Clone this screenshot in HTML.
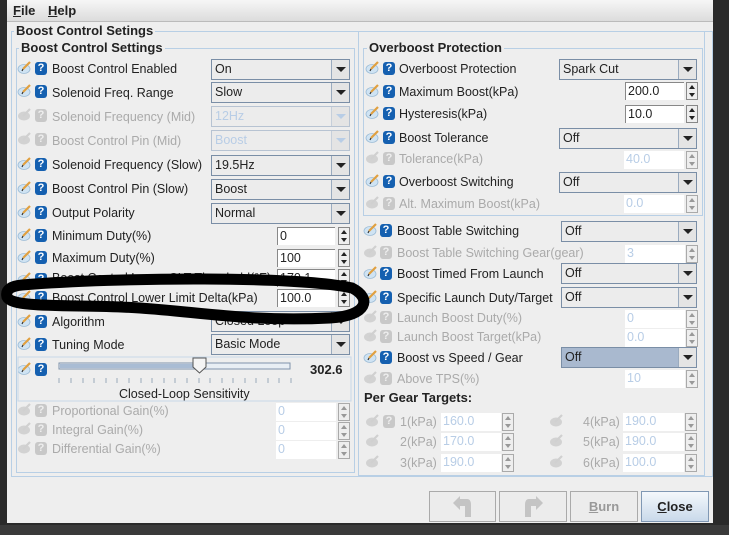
<!DOCTYPE html>
<html><head><meta charset="utf-8"><style>
*{margin:0;padding:0;box-sizing:border-box}
body{width:729px;height:535px;overflow:hidden;background:#2a2a2a;font-family:"Liberation Sans",sans-serif;font-size:12.5px;color:#222;position:relative}
.a{position:absolute}
.win{left:7px;top:0;width:706px;height:523px;background:#eeeeee}
.menu{left:7px;top:0;width:706px;height:22px;background:linear-gradient(#f6f6f6,#dcdcdc);border-bottom:1px solid #bbb}
.grp{border:1px solid #b8cfe5;}
.gt{background:#eeeeee;font-weight:bold;font-size:13px;padding:0 2px;color:#222}
.l{white-space:nowrap}
.d{color:#aaa}
.q{width:12px;height:13px;background:#1560b0;border-radius:3px;color:#fff;font-weight:bold;font-size:11px;text-align:center;line-height:13px}
.qd{background:#c8c8c8;color:#eee}
.cb{height:21px;border:1px solid #7a8ea6;background:#ececec;padding-left:3px;line-height:19px}
.cb i{position:absolute;right:0;top:0;width:18px;height:19px;border-left:1px solid #9aabbf;background:#e4e4e4}
.cb i:after{content:"";position:absolute;left:4px;top:7px;border-left:5px solid transparent;border-right:5px solid transparent;border-top:5px solid #222}
.cbd{border-color:#b7c3d2;color:#b8cde6}
.cbd i{border-color:#c6cfda}
.cbd i:after{border-top-color:#b8cde6}
.tf{height:18px;background:#fff;border-top:1px solid #888;border-left:1px solid #888;padding-left:2px;line-height:17px}
.tfd{border:none;color:#b8cde6}
.sp{width:12px;height:18px;border:1px solid #888;background:#eee}
.sp:before{content:"";position:absolute;left:2px;top:2px;border-left:3px solid transparent;border-right:3px solid transparent;border-bottom:4px solid #222}
.sp:after{content:"";position:absolute;left:2px;top:10px;border-left:3px solid transparent;border-right:3px solid transparent;border-top:4px solid #222}
.spd{border-color:#aaa}
.spd:before{border-bottom-color:#999}.spd:after{border-top-color:#999}
.btn{top:491px;height:31px;border:1px solid #aaa;background:#ececec;text-align:center;line-height:29px;color:#999;font-weight:bold;font-size:13px}
</style></head><body>
<div class="a win"></div>
<div class="a menu"></div>
<div class="a" style="left:13px;top:3px;font-weight:bold;font-size:13px"><u>F</u>ile</div>
<div class="a" style="left:48px;top:3px;font-weight:bold;font-size:13px"><u>H</u>elp</div>
<div class="a grp" style="left:11px;top:31px;width:702px;height:446px"></div>
<div class="a gt" style="left:14px;top:23px">Boost Control Setings</div>
<div class="a grp" style="left:16px;top:48px;width:339px;height:425px"></div>
<div class="a gt" style="left:19px;top:40px">Boost Control Settings</div>
<div class="a grp" style="left:358px;top:32px;width:347px;height:444px;border-top:none"></div>
<div class="a grp" style="left:363px;top:48px;width:340px;height:168px"></div>
<div class="a gt" style="left:367px;top:40px">Overboost Protection</div>

<svg class="a" style="left:0;top:0" width="729" height="535">
<defs>
<g id="b"><ellipse cx="6" cy="7" rx="6" ry="4.5" fill="#cfe3f3" stroke="#9bbbd6" stroke-width="0.8"/><path d="M5 7 L12 0" stroke="#e0a040" stroke-width="2.2"/><path d="M4 9 L5 7" stroke="#333" stroke-width="1.2"/></g>
<g id="bd"><ellipse cx="6" cy="7" rx="6" ry="4.5" fill="#d2d2d2"/><path d="M5 7 L12 0" stroke="#d0d0d0" stroke-width="2.2"/></g>
</defs>
<use href="#b" x="18" y="62"/><use href="#b" x="18" y="85"/><use href="#bd" x="18" y="109"/><use href="#bd" x="18" y="133"/><use href="#b" x="18" y="158"/><use href="#b" x="18" y="182"/><use href="#b" x="18" y="206"/><use href="#b" x="18" y="229"/><use href="#b" x="18" y="251"/><use href="#b" x="18" y="273"/><use href="#b" x="18" y="291"/><use href="#b" x="18" y="315"/><use href="#b" x="18" y="338"/><use href="#b" x="18" y="363"/>
<use href="#bd" x="18" y="404"/><use href="#bd" x="18" y="423"/><use href="#bd" x="18" y="442"/>
<use href="#b" x="366" y="62"/><use href="#b" x="366" y="85"/><use href="#b" x="366" y="107"/><use href="#b" x="366" y="131"/><use href="#bd" x="366" y="152"/><use href="#b" x="366" y="175"/><use href="#bd" x="366" y="197"/>
<use href="#b" x="364" y="224"/><use href="#bd" x="364" y="246"/><use href="#b" x="364" y="267"/><use href="#b" x="364" y="291"/><use href="#bd" x="364" y="311"/><use href="#bd" x="364" y="330"/><use href="#b" x="364" y="351"/><use href="#bd" x="364" y="372"/>
<use href="#bd" x="366" y="415"/><use href="#bd" x="366" y="435"/><use href="#bd" x="366" y="456"/><use href="#bd" x="550" y="415"/><use href="#bd" x="550" y="435"/><use href="#bd" x="550" y="456"/>
<rect x="18" y="357" width="333" height="44" fill="none" stroke="#c8d8e8"/>
<rect x="59" y="363" width="231" height="6" fill="#e8eef4" stroke="#7f93ab"/>
<rect x="60" y="364" width="139" height="4" fill="#a9bcd4"/>
<path d="M193 358 H206 V367 L199.5 373 L193 367 Z" fill="#f4f4f4" stroke="#555"/>
<g stroke="#9aaabb"><path d="M59 378v5M71 378v5M83 378v5M94 378v5M106 378v5M117 378v5M129 378v5M141 378v5M152 378v5M164 378v5M175 378v5M187 378v5M199 378v5M210 378v5M222 378v5M233 378v5M245 378v5M256 378v5M268 378v5M279 378v5M291 378v5"/></g>
</svg>

<div class="a q" style="left:35px;top:62px">?</div><div class="a q" style="left:35px;top:85px">?</div><div class="a q qd" style="left:35px;top:109px">?</div><div class="a q qd" style="left:35px;top:133px">?</div><div class="a q" style="left:35px;top:158px">?</div><div class="a q" style="left:35px;top:182px">?</div><div class="a q" style="left:35px;top:206px">?</div><div class="a q" style="left:35px;top:229px">?</div><div class="a q" style="left:35px;top:251px">?</div><div class="a q" style="left:35px;top:273px">?</div><div class="a q" style="left:35px;top:291px">?</div><div class="a q" style="left:35px;top:315px">?</div><div class="a q" style="left:35px;top:338px">?</div><div class="a q" style="left:35px;top:363px">?</div>
<div class="a q qd" style="left:35px;top:404px">?</div><div class="a q qd" style="left:35px;top:423px">?</div><div class="a q qd" style="left:35px;top:442px">?</div>
<div class="a q" style="left:383px;top:62px">?</div><div class="a q" style="left:383px;top:85px">?</div><div class="a q" style="left:383px;top:107px">?</div><div class="a q" style="left:383px;top:131px">?</div><div class="a q qd" style="left:383px;top:152px">?</div><div class="a q" style="left:383px;top:175px">?</div><div class="a q qd" style="left:383px;top:197px">?</div>
<div class="a q" style="left:380px;top:224px">?</div><div class="a q qd" style="left:380px;top:246px">?</div><div class="a q" style="left:380px;top:267px">?</div><div class="a q" style="left:380px;top:291px">?</div><div class="a q qd" style="left:380px;top:311px">?</div><div class="a q qd" style="left:380px;top:330px">?</div><div class="a q" style="left:380px;top:351px">?</div><div class="a q qd" style="left:380px;top:372px">?</div>
<div class="a q qd" style="left:383px;top:415px">?</div>

<div class="a l" style="left:52px;top:62px">Boost Control Enabled</div>
<div class="a l" style="left:52px;top:86px">Solenoid Freq. Range</div>
<div class="a l d" style="left:52px;top:110px">Solenoid Frequency (Mid)</div>
<div class="a l d" style="left:52px;top:134px">Boost Control Pin (Mid)</div>
<div class="a l" style="left:52px;top:158px">Solenoid Frequency (Slow)</div>
<div class="a l" style="left:52px;top:182px">Boost Control Pin (Slow)</div>
<div class="a l" style="left:52px;top:206px">Output Polarity</div>
<div class="a l" style="left:52px;top:229px">Minimum Duty(%)</div>
<div class="a l" style="left:52px;top:251px">Maximum Duty(%)</div>
<div class="a l" style="left:52px;top:271px">Boost Control Lower CLT Threshold(°F)</div>
<div class="a l" style="left:52px;top:291px">Boost Control Lower Limit Delta(kPa)</div>
<div class="a l" style="left:52px;top:315px">Algorithm</div>
<div class="a l" style="left:52px;top:338px">Tuning Mode</div>
<div class="a l d" style="left:52px;top:404px">Proportional Gain(%)</div>
<div class="a l d" style="left:52px;top:423px">Integral Gain(%)</div>
<div class="a l d" style="left:52px;top:442px">Differential Gain(%)</div>
<div class="a l" style="left:310px;top:362px;font-weight:bold;font-size:13px">302.6</div>
<div class="a l" style="left:119px;top:387px">Closed-Loop Sensitivity</div>

<div class="a cb" style="left:211px;top:59px;width:139px">On<i></i></div>
<div class="a cb" style="left:211px;top:82px;width:139px">Slow<i></i></div>
<div class="a cb cbd" style="left:211px;top:106px;width:139px">12Hz<i></i></div>
<div class="a cb cbd" style="left:211px;top:130px;width:139px">Boost<i></i></div>
<div class="a cb" style="left:211px;top:155px;width:139px">19.5Hz<i></i></div>
<div class="a cb" style="left:211px;top:179px;width:139px">Boost<i></i></div>
<div class="a cb" style="left:211px;top:203px;width:139px">Normal<i></i></div>
<div class="a tf" style="left:277px;top:227px;width:58px">0</div><div class="a sp" style="left:338px;top:227px"></div>
<div class="a tf" style="left:277px;top:249px;width:58px">100</div><div class="a sp" style="left:338px;top:249px"></div>
<div class="a tf" style="left:277px;top:269px;width:58px">170.1</div><div class="a sp" style="left:338px;top:269px"></div>
<div class="a tf" style="left:277px;top:289px;width:58px">100.0</div><div class="a sp" style="left:338px;top:289px"></div>
<div class="a cb" style="left:211px;top:311px;width:139px">Closed Loop<i></i></div>
<div class="a cb" style="left:211px;top:334px;width:139px">Basic Mode<i></i></div>
<div class="a tf tfd" style="left:276px;top:403px;width:60px">0</div><div class="a sp spd" style="left:338px;top:403px"></div>
<div class="a tf tfd" style="left:276px;top:422px;width:60px">0</div><div class="a sp spd" style="left:338px;top:422px"></div>
<div class="a tf tfd" style="left:276px;top:441px;width:60px">0</div><div class="a sp spd" style="left:338px;top:441px"></div>

<div class="a l" style="left:399px;top:62px">Overboost Protection</div>
<div class="a l" style="left:399px;top:85px">Maximum Boost(kPa)</div>
<div class="a l" style="left:399px;top:107px">Hysteresis(kPa)</div>
<div class="a l" style="left:399px;top:131px">Boost Tolerance</div>
<div class="a l d" style="left:399px;top:152px">Tolerance(kPa)</div>
<div class="a l" style="left:399px;top:175px">Overboost Switching</div>
<div class="a l d" style="left:399px;top:197px">Alt. Maximum Boost(kPa)</div>
<div class="a l" style="left:397px;top:224px">Boost Table Switching</div>
<div class="a l d" style="left:397px;top:246px">Boost Table Switching Gear(gear)</div>
<div class="a l" style="left:397px;top:267px">Boost Timed From Launch</div>
<div class="a l" style="left:397px;top:291px">Specific Launch Duty/Target</div>
<div class="a l d" style="left:397px;top:311px">Launch Boost Duty(%)</div>
<div class="a l d" style="left:397px;top:330px">Launch Boost Target(kPa)</div>
<div class="a l" style="left:397px;top:351px">Boost vs Speed  / Gear</div>
<div class="a l d" style="left:397px;top:372px">Above TPS(%)</div>
<div class="a l" style="left:364px;top:390px;font-weight:bold;font-size:13px">Per Gear Targets:</div>

<div class="a cb" style="left:559px;top:59px;width:138px">Spark Cut<i></i></div>
<div class="a tf" style="left:625px;top:82px;width:59px">200.0</div><div class="a sp" style="left:686px;top:82px"></div>
<div class="a tf" style="left:625px;top:105px;width:59px">10.0</div><div class="a sp" style="left:686px;top:105px"></div>
<div class="a cb" style="left:559px;top:128px;width:138px">Off<i></i></div>
<div class="a tf tfd" style="left:624px;top:151px;width:60px">40.0</div><div class="a sp spd" style="left:686px;top:151px"></div>
<div class="a cb" style="left:559px;top:172px;width:138px">Off<i></i></div>
<div class="a tf tfd" style="left:624px;top:195px;width:60px">0.0</div><div class="a sp spd" style="left:686px;top:195px"></div>
<div class="a cb" style="left:561px;top:221px;width:136px">Off<i></i></div>
<div class="a tf tfd" style="left:625px;top:245px;width:60px">3</div><div class="a sp spd" style="left:686px;top:245px"></div>
<div class="a cb" style="left:561px;top:263px;width:136px">Off<i></i></div>
<div class="a cb" style="left:561px;top:287px;width:136px">Off<i></i></div>
<div class="a tf tfd" style="left:625px;top:310px;width:60px">0</div><div class="a sp spd" style="left:686px;top:310px"></div>
<div class="a tf tfd" style="left:625px;top:329px;width:60px">0.0</div><div class="a sp spd" style="left:686px;top:329px"></div>
<div class="a cb" style="left:561px;top:347px;width:136px;background:#a9b9cf">Off<i></i></div>
<div class="a tf tfd" style="left:625px;top:370px;width:60px">10</div><div class="a sp spd" style="left:686px;top:370px"></div>

<div class="a l d" style="left:400px;top:415px">1(kPa)</div><div class="a tf tfd" style="left:441px;top:413px;width:60px">160.0</div><div class="a sp spd" style="left:502px;top:413px"></div>
<div class="a l d" style="left:400px;top:435px">2(kPa)</div><div class="a tf tfd" style="left:441px;top:433px;width:60px">170.0</div><div class="a sp spd" style="left:502px;top:433px"></div>
<div class="a l d" style="left:400px;top:456px">3(kPa)</div><div class="a tf tfd" style="left:441px;top:454px;width:60px">190.0</div><div class="a sp spd" style="left:502px;top:454px"></div>
<div class="a l d" style="left:583px;top:415px">4(kPa)</div><div class="a tf tfd" style="left:623px;top:413px;width:61px">190.0</div><div class="a sp spd" style="left:685px;top:413px"></div>
<div class="a l d" style="left:583px;top:435px">5(kPa)</div><div class="a tf tfd" style="left:623px;top:433px;width:61px">190.0</div><div class="a sp spd" style="left:685px;top:433px"></div>
<div class="a l d" style="left:583px;top:456px">6(kPa)</div><div class="a tf tfd" style="left:623px;top:454px;width:61px">100.0</div><div class="a sp spd" style="left:685px;top:454px"></div>

<div class="a btn" style="left:429px;width:67px"><svg width="24" height="24" style="margin-top:3px"><path d="M6 4 H16 Q20 4 20 10 V22 H14 V11 H9 V15 L2 8 L9 1 V4Z" fill="#c4c4c4"/></svg></div>
<div class="a btn" style="left:499px;width:68px"><svg width="24" height="24" style="margin-top:3px"><path d="M18 4 H8 Q4 4 4 10 V22 H10 V11 H15 V15 L22 8 L15 1 V4Z" fill="#c4c4c4"/></svg></div>
<div class="a btn" style="left:570px;width:68px"><u>B</u>urn</div>
<div class="a btn" style="left:641px;width:68px;border-color:#8098b4;background:linear-gradient(#f4f8fc,#c9d9ea);color:#222"><u>C</u>lose</div>

<svg class="a" style="left:0;top:0" width="729" height="535"><path d="M22 285 C120 277 300 276 352 288 C372 298 368 316 330 318 C250 322 200 312 140 308 C80 304 12 309 7 297 C5 289 12 286 22 285 Z" fill="none" stroke="#000" stroke-width="11"/></svg>
<div class="a" style="left:0;top:525px;width:729px;height:10px;background:#3a3a3a"></div>
</body></html>
